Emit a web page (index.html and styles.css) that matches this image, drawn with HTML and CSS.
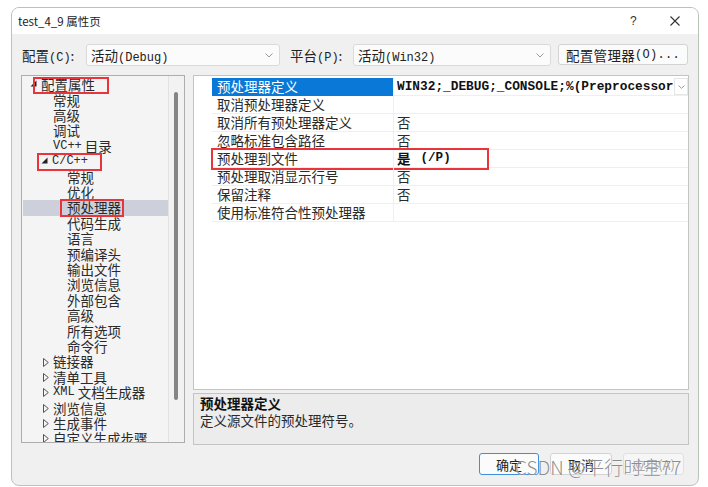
FILE: index.html
```html
<!DOCTYPE html>
<html lang="zh">
<head>
<meta charset="utf-8">
<link rel="stylesheet" href="styles.css">
</head>
<body>
<div class="dialog">
  <div class="titlebar">
    <span class="title">test_4_9 属性页</span>
    <span class="help">?</span>
    <span class="close"><svg width="10" height="10" viewBox="0 0 10 10"><path d="M0.5 0.5L9.5 9.5M9.5 0.5L0.5 9.5" stroke="#333" stroke-width="1.1" fill="none"/></svg></span>
  </div>

  <div class="toolbar">
    <span class="lbl lbl-cfg">配置<span class="lat">(C)</span>:</span>
    <div class="select sel-cfg"><span>活动<span class="lat">(Debug)</span></span><svg class="chev" width="8" height="5" viewBox="0 0 8 5"><path d="M0.5 0.5L4 4L7.5 0.5" stroke="#999" fill="none"/></svg></div>
    <span class="lbl lbl-plat">平台<span class="lat">(P)</span>:</span>
    <div class="select sel-plat"><span>活动<span class="lat">(Win32)</span></span><svg class="chev" width="8" height="5" viewBox="0 0 8 5"><path d="M0.5 0.5L4 4L7.5 0.5" stroke="#999" fill="none"/></svg></div>
    <div class="btn btn-mgr">配置管理器<span class="lat">(O)...</span></div>
  </div>

  <div class="main">
    <div class="tree">
      <div class="tree-list">
        <div class="row l0"><span class="tw"><svg width="7" height="7" viewBox="0 0 7 7"><path d="M6.5 0.5V6.5H0.5Z" fill="#222"/></svg></span><span>配置属性</span><i class="mark m1"></i></div>
        <div class="row l1">常规</div>
        <div class="row l1">高级</div>
        <div class="row l1">调试</div>
        <div class="row l1"><span class="lat">VC++</span>&nbsp;目录</div>
        <div class="row l1t"><span class="tw"><svg width="7" height="7" viewBox="0 0 7 7"><path d="M6.5 0.5V6.5H0.5Z" fill="#222"/></svg></span><span class="lat">C/C++</span><i class="mark m2"></i></div>
        <div class="row l2">常规</div>
        <div class="row l2">优化</div>
        <div class="row l2 sel">预处理器<i class="mark m3"></i></div>
        <div class="row l2">代码生成</div>
        <div class="row l2">语言</div>
        <div class="row l2">预编译头</div>
        <div class="row l2">输出文件</div>
        <div class="row l2">浏览信息</div>
        <div class="row l2">外部包含</div>
        <div class="row l2">高级</div>
        <div class="row l2">所有选项</div>
        <div class="row l2">命令行</div>
        <div class="row l1c"><span class="tw"><svg width="6" height="9" viewBox="0 0 6 9"><path d="M0.5 0.5L5.3 4.5L0.5 8.5Z" fill="none" stroke="#555"/></svg></span>链接器</div>
        <div class="row l1c"><span class="tw"><svg width="6" height="9" viewBox="0 0 6 9"><path d="M0.5 0.5L5.3 4.5L0.5 8.5Z" fill="none" stroke="#555"/></svg></span>清单工具</div>
        <div class="row l1c"><span class="tw"><svg width="6" height="9" viewBox="0 0 6 9"><path d="M0.5 0.5L5.3 4.5L0.5 8.5Z" fill="none" stroke="#555"/></svg></span><span class="lat">XML</span>&nbsp;文档生成器</div>
        <div class="row l1c"><span class="tw"><svg width="6" height="9" viewBox="0 0 6 9"><path d="M0.5 0.5L5.3 4.5L0.5 8.5Z" fill="none" stroke="#555"/></svg></span>浏览信息</div>
        <div class="row l1c"><span class="tw"><svg width="6" height="9" viewBox="0 0 6 9"><path d="M0.5 0.5L5.3 4.5L0.5 8.5Z" fill="none" stroke="#555"/></svg></span>生成事件</div>
        <div class="row l1c"><span class="tw"><svg width="6" height="9" viewBox="0 0 6 9"><path d="M0.5 0.5L5.3 4.5L0.5 8.5Z" fill="none" stroke="#555"/></svg></span>自定义生成步骤</div>
      </div>
      <div class="vscroll"><div class="thumb"></div></div>
    </div>

    <div class="right">
      <div class="grid">
        <div class="gutter"></div>
        <div class="rows">
          <div class="grow active"><div class="name">预处理器定义</div><div class="val bold"><span class="clip">WIN32;_DEBUG;_CONSOLE;%(PreprocessorDefinitions)</span><span class="dd"><svg width="7" height="4" viewBox="0 0 7 4"><path d="M0.5 0.5L3.5 3.3L6.5 0.5" stroke="#999" fill="none"/></svg></span></div></div>
          <div class="grow"><div class="name">取消预处理器定义</div><div class="val"></div></div>
          <div class="grow"><div class="name">取消所有预处理器定义</div><div class="val">否</div></div>
          <div class="grow"><div class="name">忽略标准包含路径</div><div class="val">否</div></div>
          <div class="grow marked"><div class="name">预处理到文件</div><div class="val bold"><span>是</span><span class="latb">(/P)</span></div><i class="mark m4"></i></div>
          <div class="grow"><div class="name">预处理取消显示行号</div><div class="val">否</div></div>
          <div class="grow"><div class="name">保留注释</div><div class="val">否</div></div>
          <div class="grow"><div class="name">使用标准符合性预处理器</div><div class="val"></div></div>
        </div>
      </div>
      <div class="desc">
        <div class="desc-title">预处理器定义</div>
        <div class="desc-text">定义源文件的预处理符号。</div>
      </div>
    </div>
  </div>

  <div class="buttons">
    <div class="btn b-ok">确定</div>
    <div class="btn b-cancel">取消</div>
    <div class="btn b-apply">应用(A)</div>
  </div>

  <div class="watermark">CSDN @平行时空77</div>
</div>
</body>
</html>
```

FILE: styles.css
```css
* { box-sizing: border-box; }
html, body { margin: 0; padding: 0; background: #ffffff; }
body {
  width: 708px;
  height: 487px;
  overflow: hidden;
  font-family: "Noto Sans CJK SC", "Noto Sans", sans-serif;
  font-size: 13.5px;
  color: #222;
}

.dialog {
  position: relative;
  margin: 7px 0 0 11px;
  width: 688px;
  height: 479px;
  border: 1px solid #b7c4b6;
  border-radius: 8px;
  background: #f0f0f0;
  overflow: hidden;
}

.lat {
  font-family: "Liberation Mono", monospace;
  font-size: 12px;
}
.latb {
  font-family: "Liberation Mono", monospace;
  font-size: 12.6px;
  font-weight: bold;
  margin-left: 10px;
}

/* title bar */
.titlebar {
  height: 26px;
  background: #ffffff;
  display: flex;
  align-items: center;
  padding-left: 6px;
}
.title {
  font-size: 11.5px;
  color: #1a1a1a;
  flex: 1;
}
.help {
  font-size: 12px;
  color: #333;
  width: 40px;
  font-family: "Liberation Sans", sans-serif;
}
.close {
  display: flex;
  width: 24px;
  margin-right: 4px;
  align-items: center;
}

/* toolbar */
.toolbar {
  height: 32px;
  padding: 10px 0 0 10px;
  display: flex;
  align-items: flex-start;
}
.lbl {
  height: 22px;
  line-height: 22px;
  color: #222;
  white-space: nowrap;
}
.lbl-cfg { width: 64px; }
.lbl-plat { width: 63px; margin-left: 10px; }
.select {
  height: 22px;
  display: flex;
  align-items: center;
  justify-content: space-between;
  padding: 0 6px 0 4px;
  background: #fbfbfb;
  border: 1px solid #dadada;
  border-radius: 3px;
  white-space: nowrap;
}
.sel-cfg { width: 194px; }
.sel-plat { width: 198px; }
.chev { margin-top: 1px; }
.btn {
  height: 22px;
  display: flex;
  align-items: center;
  justify-content: center;
  background: #fbfbfb;
  border: 1px solid #d3d3d3;
  border-radius: 3px;
  white-space: nowrap;
}
.btn-mgr {
  width: 130px;
  height: 21px;
  margin-left: 7px;
  letter-spacing: 0.3px;
}

/* main area */
.main {
  margin: 9px 0 0 9px;
  height: 370px;
  display: flex;
  gap: 8px;
  align-items: flex-start;
}

.tree {
  width: 164px;
  height: 368px;
  border: 1px solid #adadad;
  background: #f4f4f4;
  display: flex;
  overflow: hidden;
}
.tree-list {
  width: 146px;
  padding-top: 1.3px;
}
.row {
  position: relative;
  height: 15.4px;
  line-height: 15.4px;
  display: flex;
  align-items: center;
  white-space: nowrap;
  color: #2a2a2a;
}
.row .tw {
  display: flex;
  align-items: center;
  width: 11px;
  flex: none;
}
.row.l0 { padding-left: 8px; }
.row.l0 .tw { margin-top: -2px; }
.row.l1 { padding-left: 31px; }
.row.l1t { padding-left: 19px; }
.row.l1t .tw { margin-top: -2px; }
.row.l1c { padding-left: 21px; }
.row.l1c .tw { width: 10px; }
.row.l2 { padding-left: 45px; }
.row.sel { background: #cdcfdb; margin-left: 1px; padding-left: 44px; }

.vscroll {
  width: 16px;
  position: relative;
  background: #f2f2f2;
  border-left: 1px solid #e2e2e2;
}
.thumb {
  position: absolute;
  left: 5px;
  top: 16px;
  width: 4px;
  height: 308px;
  background: #858585;
  border-radius: 2px;
}

/* red annotation boxes */
.mark {
  position: absolute;
  border: 2px solid #e8343a;
  pointer-events: none;
}
.m1 { left: 11px; top: -0.5px; width: 76px; height: 17px; }
.m2 { left: 15px; top: -1.5px; width: 65px; height: 18px; }
.m3 { left: 37px; top: -1.5px; width: 64px; height: 18px; }
.m4 { left: -1px; top: -2px; width: 278px; height: 22px; }

/* right side */
.right {
  width: 496px;
  display: flex;
  flex-direction: column;
  gap: 3px;
}
.grid {
  height: 315px;
  border: 1px solid #c4c4c4;
  background: #ffffff;
  display: flex;
}
.gutter {
  width: 18px;
  flex: none;
}
.rows {
  padding-top: 2px;
  width: 476px;
}
.grow {
  position: relative;
  display: flex;
  height: 18px;
  line-height: 17px;
}
.name {
  width: 181px;
  padding-left: 5px;
  border-bottom: 1px solid #efefef;
  white-space: nowrap;
  color: #2a2a2a;
}
.val {
  width: 295px;
  padding-left: 3px;
  border-bottom: 1px solid #efefef;
  border-left: 1px solid #efefef;
  white-space: nowrap;
  color: #2a2a2a;
  display: flex;
  align-items: center;
}
.val.bold { font-weight: bold; color: #111; }
.grow.active .name {
  background: #0a78d7;
  color: #ffffff;
  border-bottom-color: #0a78d7;
}
.clip {
  font-family: "Liberation Mono", monospace;
  font-size: 12.8px;
  font-weight: bold;
  overflow: hidden;
  width: 278px;
  white-space: nowrap;
}
.dd {
  width: 14px;
  height: 17px;
  margin-left: 1px;
  border: 1px solid #e6e6e6;
  display: flex;
  align-items: center;
  justify-content: center;
  background: #ffffff;
}

.desc {
  height: 52px;
  border: 1px solid #c4c4c4;
  background: #ececec;
  padding: 1px 0 0 6px;
  line-height: 17px;
}
.desc-title { font-weight: bold; color: #111; }
.desc-text { color: #2a2a2a; }

/* bottom buttons */
.buttons {
  margin-top: 8px;
  display: flex;
  justify-content: flex-end;
  padding-right: 14px;
  gap: 11px;
}
.buttons .btn { font-size: 13px; color: #222; }
.b-ok { width: 60px; border-color: #3c8fdc; }
.b-cancel { width: 62px; }
.b-apply { width: 61px; color: #a8a8a8 !important; background: #f6f6f6; border-color: #e0e0e0; }

.watermark {
  position: absolute;
  left: 503px;
  top: 447px;
  font-size: 19px;
  line-height: 24px;
  color: rgba(120, 120, 120, 0.85);
  white-space: nowrap;
  font-family: "Noto Sans CJK SC", "Noto Sans", sans-serif;
  font-weight: 300;
  text-shadow: 0 0 1px #ffffff;
}
```
